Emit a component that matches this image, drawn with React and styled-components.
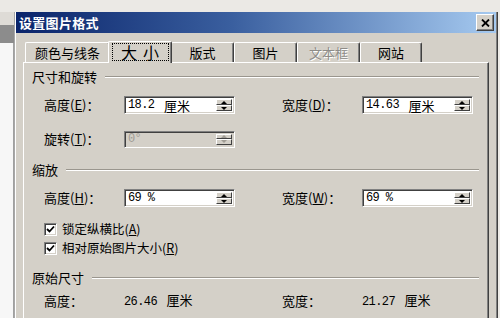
import React from "react";
import styled, { createGlobalStyle } from "styled-components";

const FACE = "#d4d0c8";

const GlobalStyle = createGlobalStyle`
  html, body { margin: 0; padding: 0; }
  body {
    background: #eeece8;
    font-family: "Noto Sans CJK SC", "Noto Sans", sans-serif;
    font-size: 13px;
    color: #000;
  }
`;

const Page = styled.div`
  width: 500px;
  height: 318px;
  overflow: hidden;
  display: grid;
  grid-template-columns: 14px 484px 2px;
  grid-template-rows: 12px 306px;
  background: #eeece8;
`;

const TopStrip = styled.div`
  grid-column: 1 / -1;
  background: #ebe9e5;
`;

const Behind = styled.div`
  display: flex;
  flex-direction: column;
`;

const BehindBlock = styled.div`
  height: ${(p) => (p.$h ? `${p.$h}px` : "auto")};
  flex: ${(p) => (p.$h ? "none" : 1)};
  background: ${(p) => p.$bg};
  border-right: 1px solid ${(p) => p.$edge || "transparent"};
`;

const Dialog = styled.div`
  display: flex;
  flex-direction: column;
  background: ${FACE};
  border-left: 1px solid #a8a8a8;
  border-right: 1px solid #404040;
  box-shadow: inset 1px 0 0 #ffffff, inset -1px 0 0 #808080;
  padding-left: 1px;
  padding-right: 1px;
  min-height: 0;
`;

const TitleBar = styled.div`
  height: 21px;
  flex: none;
  display: flex;
  align-items: center;
  justify-content: space-between;
  padding: 0 2px 0 3px;
  background: linear-gradient(90deg, #0a246a 0%, #3a5f9f 45%, #a6caf0 100%);
`;

const TitleText = styled.span`
  color: #fff;
  font-weight: bold;
  font-size: 13px;
  letter-spacing: 0.3px;
`;

const CloseButton = styled.div`
  width: 18px;
  height: 17px;
  box-sizing: border-box;
  background: ${FACE};
  border-top: 1px solid #fff;
  border-left: 1px solid #fff;
  border-right: 1px solid #404040;
  border-bottom: 1px solid #404040;
  box-shadow: inset -1px -1px 0 #808080;
  display: flex;
  align-items: center;
  justify-content: center;
`;

const Body = styled.div`
  flex: 1;
  display: flex;
  flex-direction: column;
  padding: 7px 6px 0 7px;
  min-height: 0;
`;

const TabStrip = styled.div`
  display: flex;
  align-items: flex-end;
  height: 22px;
  padding-left: 2px;
`;

const Tab = styled.div`
  width: ${(p) => p.$w}px;
  height: ${(p) => (p.$active ? 22 : 20)}px;
  box-sizing: border-box;
  display: flex;
  align-items: center;
  justify-content: center;
  background: ${FACE};
  border-top: 1px solid #fff;
  border-left: 1px solid #fff;
  border-right: 1px solid #404040;
  border-top-left-radius: 2px;
  border-top-right-radius: 2px;
  box-shadow: inset -1px 0 0 #808080;
  color: ${(p) => (p.$disabled ? "#8e8c88" : "#000")};
  text-shadow: ${(p) => (p.$disabled ? "1px 1px 0 #fff" : "none")};
  font-size: 13px;
  line-height: 16px;
  margin: ${(p) => (p.$active ? "0 -1px -1px -2px" : "0")};
  padding-bottom: ${(p) => (p.$active ? "1px" : "0")};
  position: relative;
  z-index: ${(p) => (p.$active ? 2 : 1)};
`;

const FocusBox = styled.span`
  display: flex;
  align-items: center;
  justify-content: center;
  width: 57px;
  height: 18px;
  box-sizing: border-box;
  border: 1px dotted #000;
  font-size: 16px;
  line-height: 16px;
  letter-spacing: 6px;
  padding-left: 6px;
`;

const Panel = styled.div`
  flex: 1;
  width: 466px;
  box-sizing: border-box;
  border-top: 1px solid #fff;
  border-left: 1px solid #fff;
  border-right: 1px solid #404040;
  box-shadow: inset -1px 0 0 #808080;
  padding: 0 9px 0 8px;
  display: flex;
  flex-direction: column;
`;

const GroupHeader = styled.div`
  display: flex;
  align-items: center;
  height: 14px;
  margin-top: ${(p) => p.$mt}px;
  gap: 8px;
`;

const GroupTitle = styled.span`
  font-size: 13px;
  line-height: 14px;
  white-space: nowrap;
`;

const GroupLine = styled.div`
  flex: 1;
  height: 0;
  border-top: 1px solid #9a968e;
  border-bottom: 1px solid #fff;
`;

const FieldRow = styled.div`
  display: grid;
  grid-template-columns: 80px 111px 47px 80px 111px;
  align-items: center;
  margin-left: 12px;
  margin-top: ${(p) => p.$mt}px;
  height: 18px;
`;

const Label = styled.span`
  font-size: 13px;
  line-height: 14px;
  color: #000;
  white-space: nowrap;
  u { text-decoration: underline; text-underline-offset: 1px; }
`;

const Spacer = styled.span``;

const SpinBox = styled.div`
  height: ${(p) => p.$h || 18}px;
  box-sizing: border-box;
  display: flex;
  align-items: stretch;
  background: ${(p) => (p.$disabled ? FACE : "#fff")};
  border-top: 1px solid #808080;
  border-left: 1px solid #808080;
  border-right: 1px solid #fff;
  border-bottom: 1px solid #fff;
  box-shadow: inset 1px 1px 0 #404040, inset -1px -1px 0 ${FACE};
  padding: 2px 2px 2px 3px;
`;

const ValueText = styled.span`
  flex: 1;
  display: flex;
  align-items: center;
  font-family: "Liberation Mono", "DejaVu Sans Mono", monospace;
  font-size: 12px;
  letter-spacing: -0.6px;
  line-height: 13px;
  color: ${(p) => (p.$disabled ? "#a09c94" : "#000")};
  white-space: pre;
`;

const Unit = styled.span`
  font-family: "Noto Sans CJK SC", sans-serif;
  font-size: 13px;
  letter-spacing: 0;
  line-height: 13px;
  margin-left: 3px;
`;

const Spinner = styled.div`
  width: 16px;
  display: flex;
  flex-direction: column;
`;

const SpinButton = styled.div`
  flex: 1;
  box-sizing: border-box;
  background: ${FACE};
  border-top: 1px solid #fff;
  border-left: 1px solid #fff;
  border-right: 1px solid #404040;
  border-bottom: 1px solid #404040;
  display: flex;
  align-items: center;
  justify-content: center;
`;

const Arrow = styled.span`
  width: 0;
  height: 0;
  border-left: 3px solid transparent;
  border-right: 3px solid transparent;
  ${(p) =>
    p.$down
      ? `border-top: 3px solid ${p.$disabled ? "#a09c94" : "#000"};`
      : `border-bottom: 3px solid ${p.$disabled ? "#a09c94" : "#000"};`}
`;

const CheckRow = styled.div`
  display: flex;
  align-items: center;
  gap: 5px;
  margin-left: 12px;
  margin-top: ${(p) => p.$mt}px;
  height: 14px;
  font-size: 12.5px;
  line-height: 14px;
  u { text-decoration: underline; text-underline-offset: 1px; }
`;

const CheckText = styled.span`
  line-height: 14px;
  white-space: nowrap;
`;

const CheckBox = styled.span`
  width: 13px;
  height: 13px;
  flex: none;
  box-sizing: border-box;
  background: #fff;
  border-top: 1px solid #808080;
  border-left: 1px solid #808080;
  border-right: 1px solid #fff;
  border-bottom: 1px solid #fff;
  box-shadow: inset 1px 1px 0 #404040, inset -1px -1px 0 ${FACE};
  display: flex;
  align-items: center;
  justify-content: center;
`;

const InfoRow = styled.div`
  display: grid;
  grid-template-columns: 80px 111px 47px 80px 111px;
  align-items: center;
  margin-left: 12px;
  margin-top: ${(p) => p.$mt}px;
  height: 14px;
`;

const InfoValue = styled.span`
  font-family: "Liberation Mono", "DejaVu Sans Mono", monospace;
  font-size: 12px;
  letter-spacing: -0.6px;
  line-height: 14px;
  white-space: pre;
`;

function Spin({ value, unit, disabled, h }) {
  return (
    <SpinBox $disabled={disabled} $h={h}>
      <ValueText $disabled={disabled}>
        {value}
        {unit && <Unit>{unit}</Unit>}
      </ValueText>
      <Spinner>
        <SpinButton>
          <Arrow $disabled={disabled} />
        </SpinButton>
        <SpinButton>
          <Arrow $down $disabled={disabled} />
        </SpinButton>
      </Spinner>
    </SpinBox>
  );
}

function Check() {
  return (
    <CheckBox>
      <svg width="9" height="9" viewBox="0 0 9 9">
        <path d="M1 4 L3.5 6.5 L8 1.5" fill="none" stroke="#000" strokeWidth="1.8" />
      </svg>
    </CheckBox>
  );
}

const tabs = [
  { t: "颜色与线条", w: 85 },
  { t: "大小", w: 64, active: true },
  { t: "版式", w: 63 },
  { t: "图片", w: 63 },
  { t: "文本框", w: 63, disabled: true },
  { t: "网站", w: 62 },
];

export default function App() {
  return (
    <>
      <GlobalStyle />
      <Page>
        <TopStrip />
        <Behind>
          <BehindBlock $h={13} $bg="#dedbd6" />
          <BehindBlock $h={18} $bg="#8c8c8c" />
          <BehindBlock $bg="#f7f7f7" $edge="#a0a0a0" />
        </Behind>
        <Dialog>
          <TitleBar>
            <TitleText>设置图片格式</TitleText>
            <CloseButton>
              <svg width="9" height="8" viewBox="0 0 9 8">
                <path d="M1 0.5 L8 7.5 M8 0.5 L1 7.5" stroke="#000" strokeWidth="1.8" />
              </svg>
            </CloseButton>
          </TitleBar>
          <Body>
            <TabStrip>
              {tabs.map((tb) => (
                <Tab key={tb.t} $w={tb.w} $active={tb.active} $disabled={tb.disabled}>
                  {tb.active ? <FocusBox>{tb.t}</FocusBox> : tb.t}
                </Tab>
              ))}
            </TabStrip>
            <Panel>
              <GroupHeader $mt={7}>
                <GroupTitle>尺寸和旋转</GroupTitle>
                <GroupLine />
              </GroupHeader>
              <FieldRow $mt={12}>
                <Label>高度(<u>E</u>)：</Label>
                <Spin value="18.2 " unit="厘米" />
                <Spacer />
                <Label>宽度(<u>D</u>)：</Label>
                <Spin value="14.63 " unit="厘米" />
              </FieldRow>
              <FieldRow $mt={16}>
                <Label>旋转(<u>T</u>)：</Label>
                <Spin value="0°" disabled h={17} />
              </FieldRow>
              <GroupHeader $mt={15}>
                <GroupTitle>缩放</GroupTitle>
                <GroupLine />
              </GroupHeader>
              <FieldRow $mt={12}>
                <Label>高度(<u>H</u>)：</Label>
                <Spin value="69 %" />
                <Spacer />
                <Label>宽度(<u>W</u>)：</Label>
                <Spin value="69 %" />
              </FieldRow>
              <CheckRow $mt={15}>
                <Check />
                <CheckText>锁定纵横比(<u>A</u>)</CheckText>
              </CheckRow>
              <CheckRow $mt={5}>
                <Check />
                <CheckText>相对原始图片大小(<u>R</u>)</CheckText>
              </CheckRow>
              <GroupHeader $mt={16}>
                <GroupTitle>原始尺寸</GroupTitle>
                <GroupLine />
              </GroupHeader>
              <InfoRow $mt={8}>
                <Label>高度：</Label>
                <InfoValue>
                  26.46 <Unit>厘米</Unit>
                </InfoValue>
                <Spacer />
                <Label>宽度：</Label>
                <InfoValue>
                  21.27 <Unit>厘米</Unit>
                </InfoValue>
              </InfoRow>
            </Panel>
          </Body>
        </Dialog>
        <Spacer />
      </Page>
    </>
  );
}
